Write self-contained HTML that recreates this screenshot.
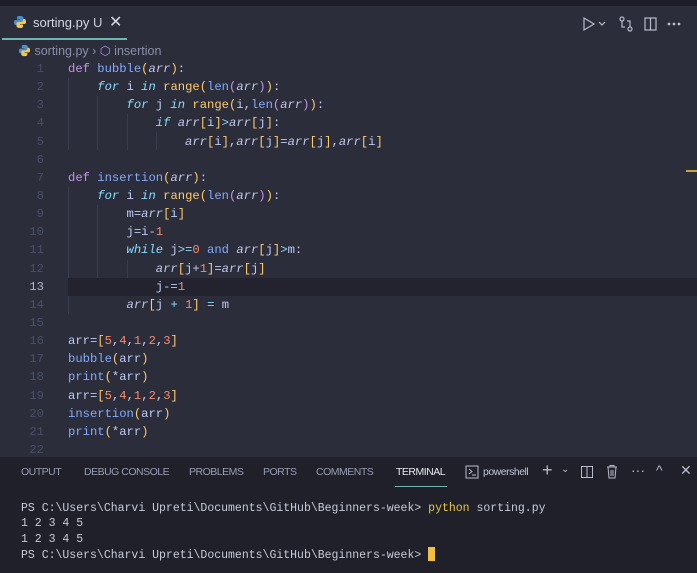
<!DOCTYPE html>
<html><head><meta charset="utf-8"><style>
*{margin:0;padding:0;box-sizing:border-box}
body{width:697px;height:573px;overflow:hidden;background:#2b2d3b;font-family:"Liberation Sans",sans-serif;position:relative}
.top{position:absolute;left:0;top:0;width:697px;height:6px;background:#1d1e28}
.tab{position:absolute;left:2px;top:6px;width:125px;height:34px;border-bottom:2px solid #6fb5b0;color:#d6d8e6;font-size:13px}
.crumb{position:absolute;left:18px;top:43px;font-size:12.5px;color:#8a8ea8}
.code{position:absolute;left:0;top:60px;width:697px;font-family:"Liberation Mono",monospace;font-size:12.2px}
.l{height:18.15px;line-height:18.15px;position:relative;white-space:pre;color:#c0caf5}
.n{position:absolute;left:0;width:44px;text-align:right;color:#4b4f66}
.t{position:absolute;left:68px}
.hl{background:#22232f}
.k{color:#c792ea}.f{color:#82aaff}.p{color:#c3c7e8;font-style:italic}.c{color:#89ddff;font-style:italic}
.y{color:#ffcb6b}.m{color:#c792ea}.b{color:#82aaff}.o{color:#f78c6c}.op{color:#89ddff}
.guide{position:absolute;width:1px;background:#3a3d50}
.panel{position:absolute;left:0;top:456px;width:697px;height:117px;background:#1f2029;border-top:1px solid #2e3040}
.ptab{position:absolute;top:9px;font-size:10.5px;color:#9a9db3;letter-spacing:-0.5px}
.term{position:absolute;left:21px;top:44px;font-family:"Liberation Mono",monospace;font-size:11.5px;color:#c8cbd8;line-height:15.3px;white-space:pre}
.ic{position:absolute;color:#b8bbcc;font-size:14px}
</style></head><body>
<div class="top"></div>
<div class="tab">
<svg style="position:absolute;left:11px;top:9px" width="14" height="14" viewBox="0 0 14 14"><path d="M7 1C4 1 4 2 4 3v1.5h3v.5H2.5C1 5 1 6.5 1 7.5S1.5 10 2.5 10H4V8.5C4 7.5 5 7 6 7h3c1 0 1.5-.5 1.5-1.5V3C10.5 2 9.5 1 7 1z" fill="#4a8fd0"/><path d="M7 13c3 0 3-1 3-2V9.5H7V9h4.5C13 9 13 7.5 13 6.5S12.5 4 11.5 4H10v1.5C10 6.5 9 7 8 7H5C4 7 3.5 7.5 3.5 8.5V11c0 1 1 2 3.5 2z" fill="#f2c94c"/></svg>
<span style="position:absolute;left:31px;top:9px">sorting.py</span><span style="position:absolute;left:91px;top:9px;color:#c8cbd8">U</span><span style="position:absolute;left:107px;top:6px;font-size:16px">✕</span>
</div>
<div class="crumb"><svg style="vertical-align:-2px" width="13" height="13" viewBox="0 0 14 14"><path d="M7 1C4 1 4 2 4 3v1.5h3v.5H2.5C1 5 1 6.5 1 7.5S1.5 10 2.5 10H4V8.5C4 7.5 5 7 6 7h3c1 0 1.5-.5 1.5-1.5V3C10.5 2 9.5 1 7 1z" fill="#4a8fd0"/><path d="M7 13c3 0 3-1 3-2V9.5H7V9h4.5C13 9 13 7.5 13 6.5S12.5 4 11.5 4H10v1.5C10 6.5 9 7 8 7H5C4 7 3.5 7.5 3.5 8.5V11c0 1 1 2 3.5 2z" fill="#f2c94c"/></svg> sorting.py › <span style="color:#b48ae8">⬡</span> insertion</div>
<svg style="position:absolute;left:582px;top:16px" width="110" height="16" viewBox="0 0 110 16" fill="none" stroke="#b8bbcc" stroke-width="1.2"><path d="M2 2l10 6-10 6z"/><path d="M17 6l3 3 3-3"/><circle cx="40" cy="3" r="2"/><circle cx="48" cy="13" r="2"/><path d="M40 5v6h3M48 11V5h-3"/><rect x="63" y="2" width="11" height="12"/><path d="M68.5 2v12"/><circle cx="87" cy="8" r=".8" fill="#b8bbcc"/><circle cx="92" cy="8" r=".8" fill="#b8bbcc"/><circle cx="97" cy="8" r=".8" fill="#b8bbcc"/></svg>
<div style="position:absolute;left:686px;top:170px;width:11px;height:2px;background:#c8a23a"></div>
<div class="guide" style="left:68px;top:78px;height:72px"></div>
<div class="guide" style="left:97px;top:96px;height:54px"></div>
<div class="guide" style="left:127px;top:114px;height:36px"></div>
<div class="guide" style="left:156px;top:132px;height:18px"></div>
<div class="guide" style="left:68px;top:187px;height:127px"></div>
<div class="guide" style="left:97px;top:205px;height:90px"></div>
<div class="guide" style="left:127px;top:260px;height:36px"></div>
<div class="code">
<div class="l"><span class="n">1</span><span class="t"><span class="k">def</span> <span class="f">bubble</span><span class="y">(</span><span class="p">arr</span><span class="y">)</span>:</span></div>
<div class="l"><span class="n">2</span><span class="t">    <span class="c">for</span> i <span class="c">in</span> <span class="y">range</span><span class="y">(</span><span class="b">len</span><span class="m">(</span><span class="p">arr</span><span class="m">)</span><span class="y">)</span>:</span></div>
<div class="l"><span class="n">3</span><span class="t">        <span class="c">for</span> j <span class="c">in</span> <span class="y">range</span><span class="y">(</span>i,<span class="b">len</span><span class="m">(</span><span class="p">arr</span><span class="m">)</span><span class="y">)</span>:</span></div>
<div class="l"><span class="n">4</span><span class="t">            <span class="c">if</span> <span class="p">arr</span><span class="y">[</span>i<span class="y">]</span><span class="op">&gt;</span><span class="p">arr</span><span class="y">[</span>j<span class="y">]</span>:</span></div>
<div class="l"><span class="n">5</span><span class="t">                <span class="p">arr</span><span class="y">[</span>i<span class="y">]</span>,<span class="p">arr</span><span class="y">[</span>j<span class="y">]</span>=<span class="p">arr</span><span class="y">[</span>j<span class="y">]</span>,<span class="p">arr</span><span class="y">[</span>i<span class="y">]</span></span></div>
<div class="l"><span class="n">6</span></div>
<div class="l"><span class="n">7</span><span class="t"><span class="k">def</span> <span class="f">insertion</span><span class="y">(</span><span class="p">arr</span><span class="y">)</span>:</span></div>
<div class="l"><span class="n">8</span><span class="t">    <span class="c">for</span> i <span class="c">in</span> <span class="y">range</span><span class="y">(</span><span class="b">len</span><span class="m">(</span><span class="p">arr</span><span class="m">)</span><span class="y">)</span>:</span></div>
<div class="l"><span class="n">9</span><span class="t">        m=<span class="p">arr</span><span class="y">[</span>i<span class="y">]</span></span></div>
<div class="l"><span class="n">10</span><span class="t">        j=i-<span class="o">1</span></span></div>
<div class="l"><span class="n">11</span><span class="t">        <span class="c">while</span> j<span class="op">&gt;=</span><span class="o">0</span> <span class="b">and</span> <span class="p">arr</span><span class="y">[</span>j<span class="y">]</span><span class="op">&gt;</span>m:</span></div>
<div class="l"><span class="n">12</span><span class="t">            <span class="p">arr</span><span class="y">[</span>j+<span class="o">1</span><span class="y">]</span>=<span class="p">arr</span><span class="y">[</span>j<span class="y">]</span></span></div>
<div class="l"><span class="n" style="color:#b0b4c8">13</span><span class="t hl" style="right:0">            j-=<span class="o">1</span></span></div>
<div class="l"><span class="n">14</span><span class="t">        <span class="p">arr</span><span class="y">[</span>j <span class="op">+</span> <span class="o">1</span><span class="y">]</span> <span class="op">=</span> m</span></div>
<div class="l"><span class="n">15</span></div>
<div class="l"><span class="n">16</span><span class="t">arr=<span class="y">[</span><span class="o">5</span>,<span class="o">4</span>,<span class="o">1</span>,<span class="o">2</span>,<span class="o">3</span><span class="y">]</span></span></div>
<div class="l"><span class="n">17</span><span class="t"><span class="f">bubble</span><span class="y">(</span>arr<span class="y">)</span></span></div>
<div class="l"><span class="n">18</span><span class="t"><span class="f">print</span><span class="y">(</span>*arr<span class="y">)</span></span></div>
<div class="l"><span class="n">19</span><span class="t">arr=<span class="y">[</span><span class="o">5</span>,<span class="o">4</span>,<span class="o">1</span>,<span class="o">2</span>,<span class="o">3</span><span class="y">]</span></span></div>
<div class="l"><span class="n">20</span><span class="t"><span class="f">insertion</span><span class="y">(</span>arr<span class="y">)</span></span></div>
<div class="l"><span class="n">21</span><span class="t"><span class="f">print</span><span class="y">(</span>*arr<span class="y">)</span></span></div>
<div class="l"><span class="n">22</span></div>
</div>
<div class="panel">
<span class="ptab" style="left:21px">OUTPUT</span>
<span class="ptab" style="left:84px">DEBUG CONSOLE</span>
<span class="ptab" style="left:189px">PROBLEMS</span>
<span class="ptab" style="left:263px">PORTS</span>
<span class="ptab" style="left:316px">COMMENTS</span>
<span class="ptab" style="left:396px;color:#e6e8f0">TERMINAL</span>
<div style="position:absolute;left:395px;top:29px;width:52px;height:1px;background:#6fb5b0"></div>
<svg style="position:absolute;left:465px;top:8px" width="14" height="14" viewBox="0 0 14 14" fill="none" stroke="#b8bbcc"><rect x="1" y="1" width="12" height="12"/><path d="M4 4l3 2.5-3 2.5M7 10h4"/></svg>
<span class="ptab" style="left:483px;color:#c0c3d4">powershell</span>
<span class="ic" style="left:542px;top:3px;font-size:18px">+</span><span class="ic" style="left:561px;top:7px;font-size:10px">⌄</span>
<svg style="position:absolute;left:580px;top:8px" width="14" height="14" viewBox="0 0 14 14" fill="none" stroke="#b8bbcc"><rect x="1.5" y="1.5" width="11" height="11"/><path d="M7 1.5v11"/></svg>
<svg style="position:absolute;left:605px;top:7px" width="14" height="15" viewBox="0 0 14 15" fill="none" stroke="#b8bbcc"><path d="M2 3h10M5 3V1.5h4V3M3 3l1 11h6l1-11M6 6v6M8 6v6"/></svg>
<span class="ic" style="left:631px;top:5px">···</span>
<span class="ic" style="left:656px;top:5px">^</span>
<span class="ic" style="left:680px;top:5px">✕</span>
<div class="term">PS C:\Users\Charvi Upreti\Documents\GitHub\Beginners-week&gt; <span style="color:#e8c34a">python</span> sorting.py
1 2 3 4 5
1 2 3 4 5
PS C:\Users\Charvi Upreti\Documents\GitHub\Beginners-week&gt; <span style="display:inline-block;width:7px;height:14px;background:#f0c040;vertical-align:-3px"></span></div>
</div>
</body></html>
